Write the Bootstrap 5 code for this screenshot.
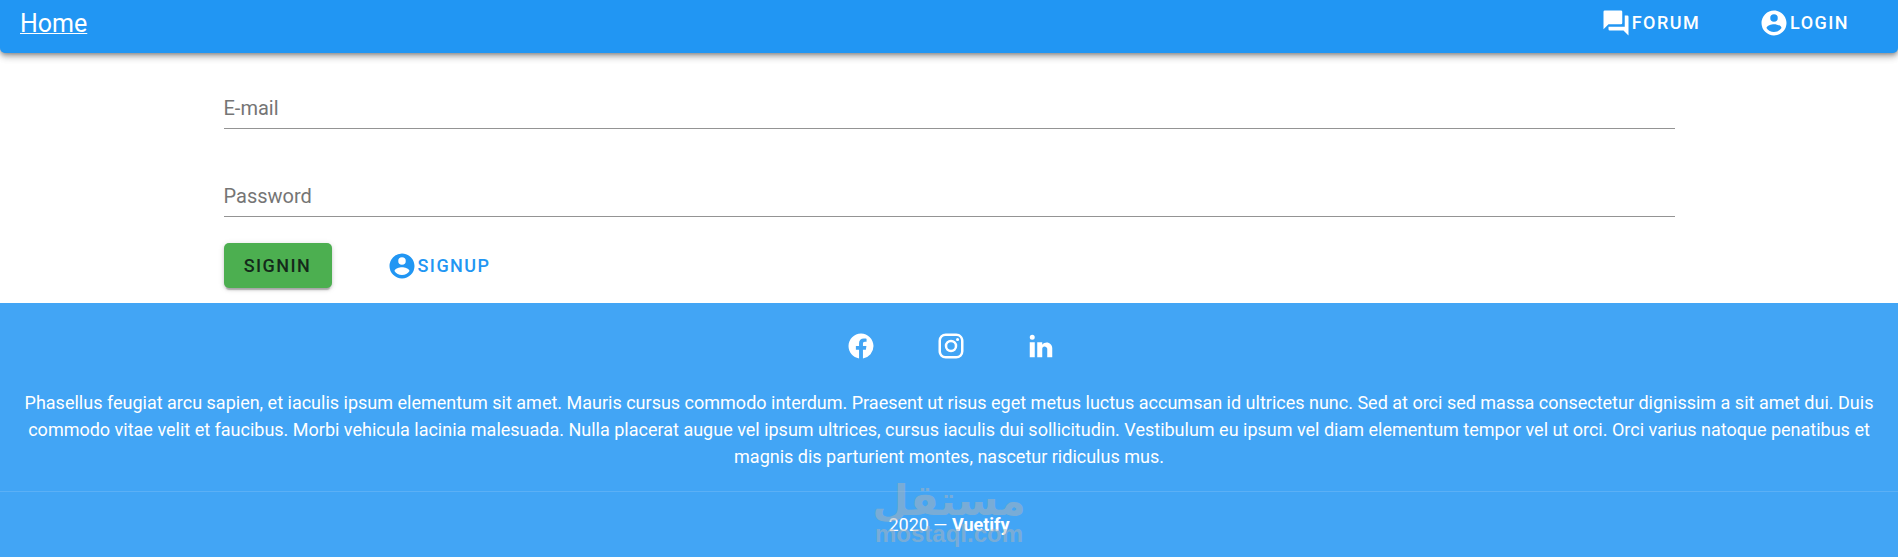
<!DOCTYPE html>
<html lang="en">
<head>
<meta charset="utf-8">
<meta name="viewport" content="width=device-width, initial-scale=1">
<title>Sign in</title>
<link href="https://cdn.jsdelivr.net/npm/bootstrap@5.3.0/dist/css/bootstrap.min.css" rel="stylesheet">
<style>
  body { font-family: Roboto, "Liberation Sans", sans-serif; background: #fff; }
  .icon { width: 30px; height: 30px; fill: currentColor; flex: none; }
  .app-bar {
    background: #2196f3; border-radius: 0 0 5px 5px; padding: 5px 49px 10px 20px;
    box-shadow: 0 2px 5px -1px rgba(0,0,0,.4), 0 5px 6px 0 rgba(0,0,0,.14), 0 1px 12px 0 rgba(0,0,0,.12);
  }
  .app-bar .navbar-brand { font-size: 25px; line-height: 38px; color: #fff; text-decoration: underline; text-decoration-thickness: 1px; }
  .text-link, .btn-sign { font-size: 18px; line-height: 27px; font-weight: 500; letter-spacing: .08em; text-transform: uppercase; text-decoration: none; }
  .text-link { gap: 1px; }
  .nav-group { gap: 59px; margin-top: -3px; }
  .form-area { max-width: 1483px; padding: 35px 16px 15px; }
  .field-stack { gap: 47px; }
  .field { grid-template-columns: 1fr; }
  .field > * { grid-area: 1 / 1; }
  .field label { font-size: 20px; line-height: 40px; color: #757575; pointer-events: none; z-index: 1; }
  .field .form-control { height: 41px; border: 0; border-bottom: 1px solid #949494; border-radius: 0; padding: 0; background: transparent; font-size: 20px; }
  .field .form-control:focus { box-shadow: none; border-color: #2196f3; }
  .field:focus-within label, .field:has(.form-control:not(:placeholder-shown)) label { opacity: 0; }
  .actions { gap: 55px; margin-top: 26px; }
  .btn-sign {
    --bs-btn-bg: #4caf50; --bs-btn-hover-bg: #43a047; --bs-btn-color: #14291a; --bs-btn-hover-color: #14291a;
    border: 0; border-radius: 5px; padding: 9px 20px; min-width: 108px;
    box-shadow: 0 4px 1px -2px rgba(0,0,0,.2), 0 2px 3px 0 rgba(0,0,0,.14), 0 1px 6px 0 rgba(0,0,0,.12);
  }
  .signup { color: #2196f3; }
  .page-foot { background: #42a5f5; color: #fff; font-size: 18px; line-height: 27px; }
  .social { gap: 60px; padding: 28px 0 28px 3px; }
  .blurb { padding: 0 20px 21px; }
  .copyright { border-top: 1px solid #5bb0f6; padding: 19px 16px; }
  .watermark { left: 50%; bottom: 11px; transform: translateX(-50%); color: #b0b4b8; opacity: .5; font-weight: 700; pointer-events: none; }
  .mark-ar { font-family: "DejaVu Sans", sans-serif; font-size: 42px; line-height: 42px; }
  .mark-en { font-family: "Liberation Sans", sans-serif; font-size: 24px; line-height: 24px; }
</style>
</head>
<body>
<nav class="app-bar d-flex align-items-center justify-content-between">
  <a class="navbar-brand m-0" href="#">Home</a>
  <div class="nav-group d-flex align-items-center">
    <a class="text-link text-white d-flex align-items-center" href="#">
      <svg class="icon" viewBox="0 0 24 24" aria-hidden="true"><path d="M17 12V3a1 1 0 0 0-1-1H3a1 1 0 0 0-1 1v14l4-4h10a1 1 0 0 0 1-1m4-6h-2v9H6v2a1 1 0 0 0 1 1h11l4 4V7a1 1 0 0 0-1-1z"/></svg>
      <span>Forum</span>
    </a>
    <a class="text-link text-white d-flex align-items-center" href="#">
      <svg class="icon" viewBox="0 0 24 24" aria-hidden="true"><path d="M12 19.2c-2.500 0-4.710-1.280-6-3.200.030-2 4-3.100 6-3.100s5.970 1.100 6 3.100a7.232 7.232 0 0 1-6 3.200M12 5a3 3 0 0 1 3 3 3 3 0 0 1-3 3 3 3 0 0 1-3-3 3 3 0 0 1 3-3m0-3A10 10 0 0 0 2 12a10 10 0 0 0 10 10 10 10 0 0 0 10-10c0-5.530-4.500-10-10-10z"/></svg>
      <span>Login</span>
    </a>
  </div>
</nav>

<main>
  <form class="form-area container-fluid">
    <div class="field-stack d-flex flex-column">
      <div class="field d-grid">
        <label for="email">E-mail</label>
        <input class="form-control" type="email" id="email" placeholder=" ">
      </div>
      <div class="field d-grid">
        <label for="password">Password</label>
        <input class="form-control" type="password" id="password" placeholder=" ">
      </div>
    </div>
    <div class="actions d-flex align-items-center">
      <button class="btn btn-sign" type="submit">Signin</button>
      <a class="text-link signup d-flex align-items-center" href="#">
        <svg class="icon" viewBox="0 0 24 24" aria-hidden="true"><path d="M12 19.2c-2.500 0-4.710-1.280-6-3.200.030-2 4-3.100 6-3.100s5.970 1.100 6 3.100a7.232 7.232 0 0 1-6 3.200M12 5a3 3 0 0 1 3 3 3 3 0 0 1-3 3 3 3 0 0 1-3-3 3 3 0 0 1 3-3m0-3A10 10 0 0 0 2 12a10 10 0 0 0 10 10 10 10 0 0 0 10-10c0-5.530-4.500-10-10-10z"/></svg>
        <span>Signup</span>
      </a>
    </div>
  </form>
</main>

<footer class="page-foot position-relative text-center">
  <div class="social d-flex justify-content-center">
    <a class="d-flex text-white" href="#" aria-label="Facebook"><svg class="icon" viewBox="0 0 24 24"><path d="M12 2.040C6.500 2.040 2 6.530 2 12.060 2 17.060 5.660 21.210 10.440 21.960V14.960H7.900V12.060H10.440V9.850C10.440 7.340 11.930 5.960 14.220 5.960 15.310 5.960 16.450 6.150 16.450 6.150V8.620H15.190C13.950 8.620 13.560 9.390 13.560 10.180V12.060H16.340L15.890 14.960H13.560V21.960A10 10 0 0 0 22 12.060C22 6.530 17.500 2.040 12 2.040Z"/></svg></a>
    <a class="d-flex text-white" href="#" aria-label="Instagram"><svg class="icon" viewBox="0 0 24 24"><path d="M7.800 2h8.400C19.400 2 22 4.600 22 7.800v8.400a5.800 5.800 0 0 1-5.800 5.800H7.800C4.600 22 2 19.400 2 16.200V7.800A5.800 5.800 0 0 1 7.800 2m-.2 2A3.600 3.600 0 0 0 4 7.600v8.800C4 18.390 5.610 20 7.600 20h8.800a3.600 3.600 0 0 0 3.600-3.600V7.600C20 5.610 18.390 4 16.400 4H7.600m9.650 1.500a1.250 1.250 0 1 1 0 2.500 1.250 1.250 0 0 1 0-2.500M12 7a5 5 0 1 1 0 10 5 5 0 0 1 0-10m0 2a3 3 0 1 0 0 6 3 3 0 0 0 0-6z"/></svg></a>
    <a class="d-flex text-white" href="#" aria-label="LinkedIn"><svg class="icon" viewBox="0 0 24 24"><path d="M21 21h-4v-6.750c0-1.060-1.190-1.940-2.250-1.940S13 13.190 13 14.250V21H9V9h4v2c.66-1.070 2.360-1.760 3.500-1.760 2.500 0 4.500 2.040 4.500 4.510V21M7 21H3V9h4v12M5 3a2 2 0 1 1 0 4 2 2 0 0 1 0-4z"/></svg></a>
  </div>
  <div class="blurb">Phasellus feugiat arcu sapien, et iaculis ipsum elementum sit amet. Mauris cursus commodo interdum. Praesent ut risus eget metus luctus accumsan id ultrices nunc. Sed at orci sed massa consectetur dignissim a sit amet dui. Duis commodo vitae velit et faucibus. Morbi vehicula lacinia malesuada. Nulla placerat augue vel ipsum ultrices, cursus iaculis dui sollicitudin. Vestibulum eu ipsum vel diam elementum tempor vel ut orci. Orci varius natoque penatibus et magnis dis parturient montes, nascetur ridiculus mus.</div>
  <div class="copyright">2020 — <strong>Vuetify</strong></div>
  <div class="watermark position-absolute d-flex flex-column align-items-center">
    <span class="mark-ar" lang="ar" dir="rtl">مستقل</span>
    <span class="mark-en">mostaql.com</span>
  </div>
</footer>
<script src="https://cdn.jsdelivr.net/npm/bootstrap@5.3.0/dist/js/bootstrap.bundle.min.js"></script>
</body>
</html>
